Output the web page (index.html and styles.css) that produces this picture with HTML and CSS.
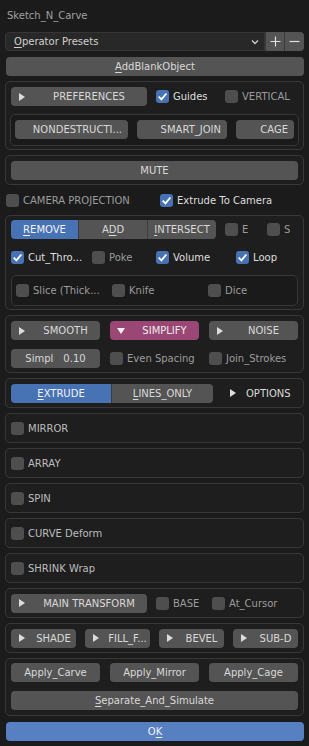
FILE: index.html
```html
<!DOCTYPE html>
<html lang="en">
<head>
    <meta charset="UTF-8">
    <meta name="viewport" content="width=device-width, initial-scale=1.0">
    <title>Sketch_N_Carve</title>
    <link rel="stylesheet" href="styles.css">
</head>
<body>
<div class="popup">

    <div class="title">Sketch_N_Carve</div>

    <!-- presets -->
    <div class="presets">
        <div class="dropdown">
            <span><u>O</u>perator Presets</span>
            <svg class="chev" width="8" height="6" viewBox="0 0 8 6"><path d="M1 1.5 L4 4.5 L7 1.5" fill="none" stroke="#cfcfcf" stroke-width="1.3"/></svg>
        </div>
        <div class="sq-btn"><svg width="11" height="11" viewBox="0 0 11 11"><path d="M5.5 0.5 V10.5 M0.5 5.5 H10.5" stroke="#e0e0e0" stroke-width="1.2"/></svg></div>
        <div class="sq-btn"><svg width="11" height="11" viewBox="0 0 11 11"><path d="M0.5 5.5 H10.5" stroke="#e0e0e0" stroke-width="1.2"/></svg></div>
    </div>

    <div class="btn add-blank"><span><u>A</u>ddBlankObject</span></div>

    <!-- preferences -->
    <div class="box box-prefs">
        <div class="row">
            <div class="btn tri w136"><span class="ico"><svg class="tri-r" viewBox="0 0 6 8"><path d="M0 0 L6 4 L0 8 Z"/></svg></span><span class="lbl">PREFERENCES</span></div>
            <label class="check on ml9 w69"><span class="cb"><svg viewBox="0 0 12 12"><path d="M2.5 6.2 L5 8.7 L9.6 3.2" fill="none" stroke="#fff" stroke-width="1.7"/></svg></span>Guides</label>
            <label class="check"><span class="cb"></span>VERTICAL</label>
        </div>
        <div class="inner inner-modes">
            <div class="btn w113 right-text">NONDESTRUCTI...</div>
            <div class="btn w90 right-text">SMART_JOIN</div>
            <div class="btn grow right-text">CAGE</div>
        </div>
    </div>

    <div class="box box-single">
        <div class="btn full">MUTE</div>
    </div>

    <div class="camera-row">
        <label class="check w154"><span class="cb"></span>CAMERA PROJECTION</label>
        <label class="check on"><span class="cb"><svg viewBox="0 0 12 12"><path d="M2.5 6.2 L5 8.7 L9.6 3.2" fill="none" stroke="#fff" stroke-width="1.7"/></svg></span>Extrude To Camera</label>
    </div>

    <!-- boolean ops -->
    <div class="box box-bool">
        <div class="row">
            <div class="segmented">
                <div class="seg active w67"><u>R</u>EMOVE</div>
                <div class="seg w69">A<u>D</u>D</div>
                <div class="seg w69"><u>I</u>NTERSECT</div>
            </div>
            <label class="check ml9 w42"><span class="cb"></span>E</label>
            <label class="check"><span class="cb"></span>S</label>
        </div>
        <div class="row row-opts">
            <label class="check on w81"><span class="cb"><svg viewBox="0 0 12 12"><path d="M2.5 6.2 L5 8.7 L9.6 3.2" fill="none" stroke="#fff" stroke-width="1.7"/></svg></span>Cut_Thro...</label>
            <label class="check w64"><span class="cb"></span>Poke</label>
            <label class="check on w80"><span class="cb"><svg viewBox="0 0 12 12"><path d="M2.5 6.2 L5 8.7 L9.6 3.2" fill="none" stroke="#fff" stroke-width="1.7"/></svg></span>Volume</label>
            <label class="check on"><span class="cb"><svg viewBox="0 0 12 12"><path d="M2.5 6.2 L5 8.7 L9.6 3.2" fill="none" stroke="#fff" stroke-width="1.7"/></svg></span>Loop</label>
        </div>
        <div class="inner inner-cuts">
            <label class="check w96"><span class="cb"></span>Slice (Thick...</label>
            <label class="check w96"><span class="cb"></span>Knife</label>
            <label class="check"><span class="cb"></span>Dice</label>
        </div>
    </div>

    <!-- stroke processing -->
    <div class="box box-stroke">
        <div class="grid3">
            <div class="btn tri"><span class="ico"><svg class="tri-r" viewBox="0 0 6 8"><path d="M0 0 L6 4 L0 8 Z"/></svg></span><span class="lbl">SMOOTH</span></div>
            <div class="btn tri pink"><span class="ico"><svg class="tri-d" viewBox="0 0 8 6"><path d="M0 0 L8 0 L4 6 Z"/></svg></span><span class="lbl">SIMPLIFY</span></div>
            <div class="btn tri"><span class="ico"><svg class="tri-r" viewBox="0 0 6 8"><path d="M0 0 L6 4 L0 8 Z"/></svg></span><span class="lbl">NOISE</span></div>
        </div>
        <div class="grid3 row-gap">
            <div class="btn field"><span>Simpl</span><span>0.10</span></div>
            <label class="check"><span class="cb"></span>Even Spacing</label>
            <label class="check"><span class="cb"></span>Join_Strokes</label>
        </div>
    </div>

    <div class="box box-single">
        <div class="row">
            <div class="segmented">
                <div class="seg active w100"><u>E</u>XTRUDE</div>
                <div class="seg w102"><u>L</u>INES_ONLY</div>
            </div>
            <div class="disclose"><svg class="tri-r" viewBox="0 0 6 8"><path d="M0 0 L6 4 L0 8 Z"/></svg>OPTIONS</div>
        </div>
    </div>

    <!-- modifiers -->
    <div class="box box-single"><label class="check mod"><span class="cb"></span>MIRROR</label></div>
    <div class="box box-single"><label class="check mod"><span class="cb"></span>ARRAY</label></div>
    <div class="box box-single"><label class="check mod"><span class="cb"></span>SPIN</label></div>
    <div class="box box-single"><label class="check mod"><span class="cb"></span>CURVE Deform</label></div>
    <div class="box box-single"><label class="check mod"><span class="cb"></span>SHRINK Wrap</label></div>

    <div class="box box-single">
        <div class="row">
            <div class="btn tri w136"><span class="ico"><svg class="tri-r" viewBox="0 0 6 8"><path d="M0 0 L6 4 L0 8 Z"/></svg></span><span class="lbl">MAIN TRANSFORM</span></div>
            <label class="check ml9 w56"><span class="cb"></span>BASE</label>
            <label class="check"><span class="cb"></span>At_Cursor</label>
        </div>
    </div>

    <div class="box box-single">
        <div class="grid4">
            <div class="btn tri"><span class="ico"><svg class="tri-r" viewBox="0 0 6 8"><path d="M0 0 L6 4 L0 8 Z"/></svg></span><span class="lbl">SHADE</span></div>
            <div class="btn tri"><span class="ico"><svg class="tri-r" viewBox="0 0 6 8"><path d="M0 0 L6 4 L0 8 Z"/></svg></span><span class="lbl">FILL_F...</span></div>
            <div class="btn tri"><span class="ico"><svg class="tri-r" viewBox="0 0 6 8"><path d="M0 0 L6 4 L0 8 Z"/></svg></span><span class="lbl">BEVEL</span></div>
            <div class="btn tri"><span class="ico"><svg class="tri-r" viewBox="0 0 6 8"><path d="M0 0 L6 4 L0 8 Z"/></svg></span><span class="lbl">SUB-D</span></div>
        </div>
    </div>

    <div class="box box-apply">
        <div class="grid3">
            <div class="btn">Apply_Carve</div>
            <div class="btn">Apply_Mirror</div>
            <div class="btn">Apply_Cage</div>
        </div>
        <div class="btn full row-gap"><span><u>S</u>eparate_And_Simulate</span></div>
    </div>

    <div class="btn ok">O<u>K</u></div>

</div>
</body>
</html>
```

FILE: styles.css
```css
* {
    box-sizing: border-box;
}
body {
    margin: 0;
    background-color: #1b1b1b;
    font-family: "DejaVu Sans", sans-serif;
    font-size: 10px;
    color: #d8d8d8;
}
u {
    text-decoration: underline;
    text-underline-offset: 2px;
    text-decoration-thickness: 1px;
}
.popup {
    width: 309px;
    height: 746px;
    padding: 5px 5px 0 5px;
    background-color: #1b1b1b;
}
.title {
    height: 22px;
    line-height: 22px;
    padding-left: 2px;
    color: #a0a0a0;
}

/* presets row */
.presets {
    display: flex;
    margin-top: 5px;
    height: 19px;
}
.dropdown {
    flex: 1;
    display: flex;
    align-items: center;
    justify-content: space-between;
    padding: 0 5px 0 8px;
    background-color: #282828;
    border: 1px solid #363636;
    border-radius: 4px 0 0 4px;
    color: #cfcfcf;
}
.sq-btn {
    width: 19px;
    display: flex;
    align-items: center;
    justify-content: center;
    background-color: #545454;
    border-left: 1px solid #3a3a3a;
}
.sq-btn:last-child {
    width: 20px;
    border-radius: 0 4px 4px 0;
}

/* buttons */
.btn {
    height: 19px;
    display: flex;
    align-items: center;
    justify-content: center;
    background-color: #545454;
    border-radius: 4px;
    color: #d9d9d9;
    white-space: nowrap;
    overflow: hidden;
}
.add-blank {
    margin-top: 6px;
    margin-left: 1px;
}
.btn.tri {
    justify-content: flex-start;
}
.btn.tri .ico {
    width: 22px;
    display: flex;
    justify-content: center;
    flex-shrink: 0;
}
.btn.tri .lbl {
    flex: 1;
    text-align: center;
    padding-right: 2px;
}
.tri-r {
    width: 6px;
    height: 8px;
    fill: #dcdcdc;
}
.tri-d {
    width: 8px;
    height: 6px;
    fill: #f0f0f0;
}
.btn.pink {
    background-color: #9a4775;
    color: #ececec;
}
.btn.right-text {
    justify-content: flex-end;
    padding-right: 6px;
}
.btn.field {
    gap: 10px;
}
.full {
    width: 100%;
}
.ok {
    margin: 6px 0 0 1px;
    background-color: #5680c2;
    color: #f4f4f4;
}

/* boxes */
.box {
    margin-top: 5px;
    border: 1px solid #383838;
    border-radius: 5px;
    background-color: #1e1e1e;
    padding: 4px 5px 4px 5px;
}
.box-prefs {
    margin-top: 5px;
    padding: 5px 5px 3px 5px;
}
.box-single {
    min-height: 30px;
    display: flex;
    flex-direction: column;
    justify-content: center;
}
.box-single > .check {
    height: 19px;
}
.box-bool {
    padding: 4px 5px 3px 5px;
}
.box-stroke {
    padding: 5px 5px 4px 5px;
}
.box-apply {
    padding: 4px 5px 5px 5px;
}
.inner {
    display: flex;
    border: 1px solid #373737;
    border-radius: 5px;
    background-color: #1a1a1a;
}
.inner-modes {
    margin: 8px -1px 0 -1px;
    padding: 5px 4px 6px 4px;
    gap: 9px;
}
.inner-cuts {
    margin-top: 8px;
    padding: 0 4px;
    height: 31px;
    align-items: center;
}
.row {
    display: flex;
    align-items: center;
    height: 19px;
}
.row-opts {
    margin-top: 9px;
}
.row-gap {
    margin-top: 9px;
}
.grid3 {
    display: grid;
    grid-template-columns: 1fr 1fr 1fr;
    column-gap: 10px;
}
.grid4 {
    display: grid;
    grid-template-columns: 1fr 1fr 1fr 1fr;
    column-gap: 9px;
}

/* widths */
.w42 { width: 42px; }
.w56 { width: 56px; }
.w64 { width: 64px; }
.w67 { width: 67px; }
.w69 { width: 69px; }
.w80 { width: 80px; }
.w81 { width: 81px; }
.w90 { width: 90px; }
.w96 { width: 96px; }
.w100 { width: 100px; }
.w102 { width: 102px; }
.w113 { width: 113px; }
.w136 { width: 136px; }
.w154 { width: 154px; }
.ml9 { margin-left: 9px; }
.grow { flex: 1; }

/* checkboxes */
.check {
    display: flex;
    align-items: center;
    height: 19px;
    color: #9c9c9c;
    white-space: nowrap;
}
.check.on {
    color: #dedede;
}
.check.mod {
    color: #bdbdbd;
}
.cb {
    width: 13px;
    height: 13px;
    margin-right: 4px;
    border-radius: 3px;
    background-color: #4e4e4e;
    flex-shrink: 0;
}
.check.on .cb {
    background-color: #4772b3;
}
.cb svg {
    width: 13px;
    height: 13px;
    display: block;
}

.camera-row {
    display: flex;
    align-items: center;
    height: 19px;
    margin-top: 6px;
    padding-left: 1px;
}

/* segmented */
.segmented {
    display: flex;
    height: 19px;
    border-radius: 4px;
    overflow: hidden;
}
.seg {
    display: flex;
    align-items: center;
    justify-content: center;
    background-color: #545454;
    color: #d9d9d9;
    border-left: 1px solid #3c3c3c;
}
.seg:first-child {
    border-left: none;
}
.seg.active {
    background-color: #4772b3;
    color: #f4f4f4;
}
.disclose {
    display: flex;
    align-items: center;
    gap: 10px;
    margin-left: 17px;
    color: #d9d9d9;
}
```
